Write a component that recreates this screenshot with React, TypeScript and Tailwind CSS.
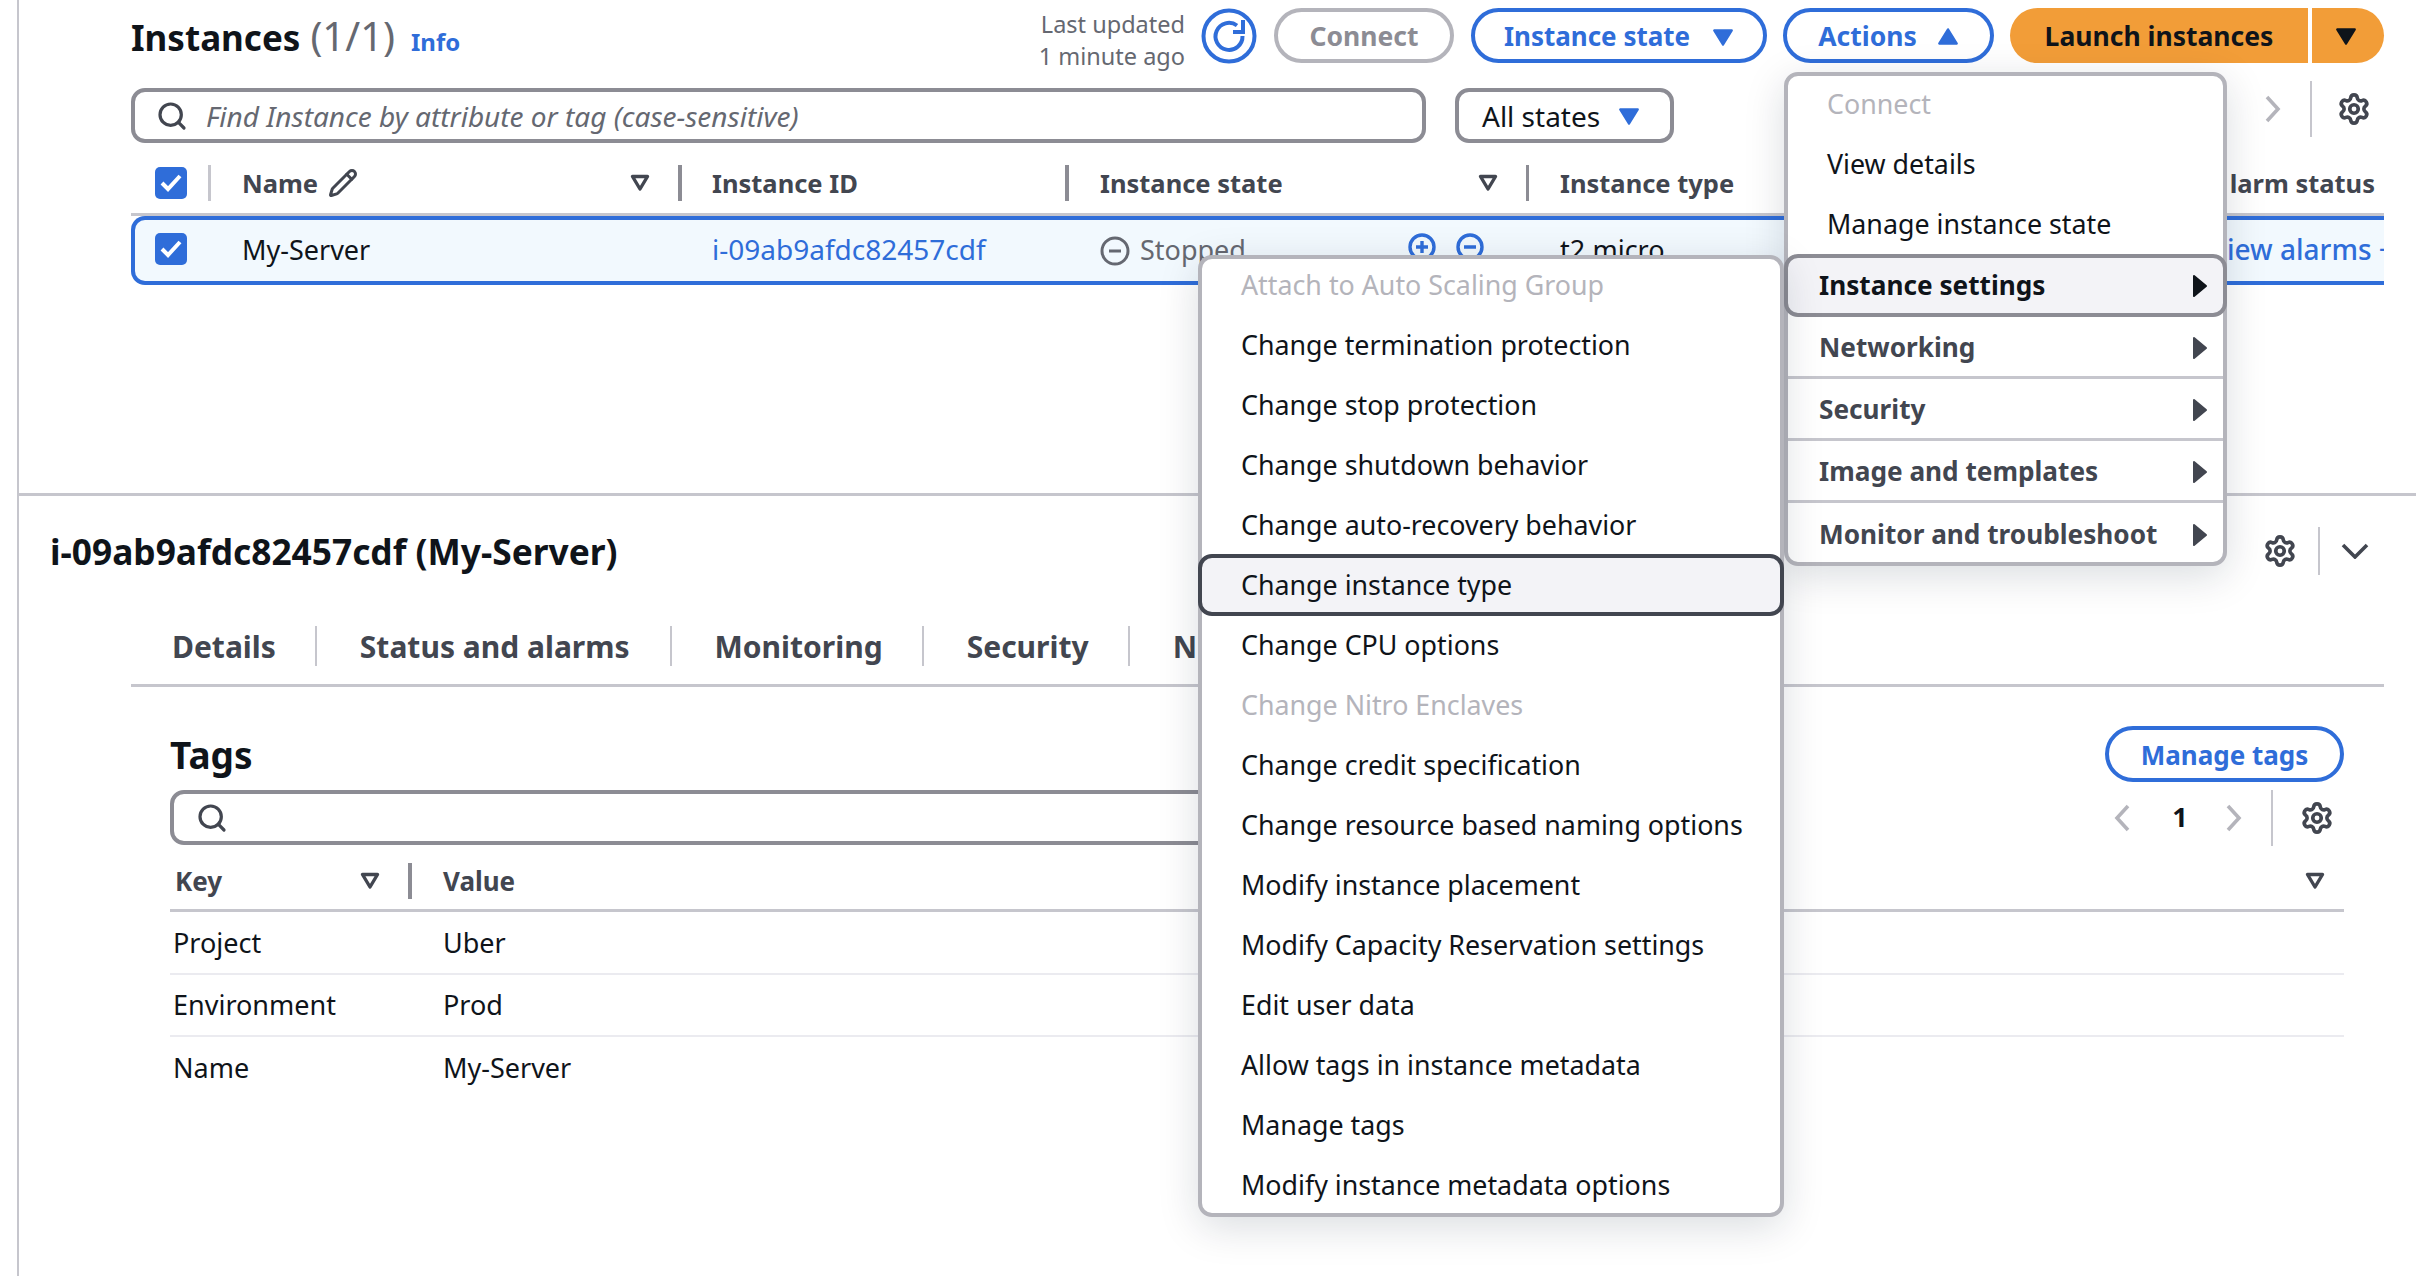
import { Pencil, Search, Settings } from 'lucide-react';

const font = "font-['Noto_Sans','Open_Sans',sans-serif]";

const submenu = [
  { label: 'Attach to Auto Scaling Group', disabled: true },
  { label: 'Change termination protection' },
  { label: 'Change stop protection' },
  { label: 'Change shutdown behavior' },
  { label: 'Change auto-recovery behavior' },
  { label: 'Change instance type', active: true },
  { label: 'Change CPU options' },
  { label: 'Change Nitro Enclaves', disabled: true },
  { label: 'Change credit specification' },
  { label: 'Change resource based naming options' },
  { label: 'Modify instance placement' },
  { label: 'Modify Capacity Reservation settings' },
  { label: 'Edit user data' },
  { label: 'Allow tags in instance metadata' },
  { label: 'Manage tags' },
  { label: 'Modify instance metadata options' },
];

function Caret({ className, up }: { className: string; up?: boolean }) {
  return (
    <svg viewBox="0 0 20 20" className={className} fill="currentColor">
      <path
        d={up ? 'M10 3 L18 16 L2 16 Z' : 'M2 4 L18 4 L10 17 Z'}
        stroke="currentColor"
        strokeWidth="2"
        strokeLinejoin="round"
      />
    </svg>
  );
}

function CaretRight({ className }: { className: string }) {
  return (
    <svg viewBox="0 0 16 24" className={className} fill="currentColor">
      <path d="M2 2 L14 12 L2 22 Z" stroke="currentColor" strokeWidth="2" strokeLinejoin="round" />
    </svg>
  );
}

function SortIcon() {
  return (
    <svg viewBox="0 0 20 20" className="w-5 h-5 shrink-0 text-[#424650]" fill="none">
      <path d="M2.5 3.5 L17.5 3.5 L10 16 Z" stroke="currentColor" strokeWidth="3.4" strokeLinejoin="round" />
    </svg>
  );
}

function Chevron({ left }: { left?: boolean }) {
  return (
    <svg viewBox="0 0 16 28" className="w-4 h-7 shrink-0 text-[#b4b4bb]" fill="none">
      <path d={left ? 'M14 2 L3 14 L14 26' : 'M2 2 L13 14 L2 26'} stroke="currentColor" strokeWidth="3.6" />
    </svg>
  );
}

function Checkbox({ className }: { className?: string }) {
  return (
    <span className={`w-8 h-8 rounded-[5px] bg-[#2f6dd9] flex items-center justify-center shrink-0 ${className ?? ''}`}>
      <svg viewBox="0 0 32 32" className="w-8 h-8" fill="none">
        <path d="M7 16 L13 22 L25 9" stroke="white" strokeWidth="4" />
      </svg>
    </span>
  );
}

function Refresh() {
  return (
    <svg viewBox="0 0 56 56" className="w-[56px] h-[56px] shrink-0" fill="none" stroke="#2f6dd9" strokeWidth="4">
      <circle cx="28" cy="28" r="25.5" />
      <path d="M36 17.5 A13.5 13.5 0 1 0 41.5 28" />
      <path d="M42 12 V24 H32" />
    </svg>
  );
}

function CircleIcon({ plus }: { plus?: boolean }) {
  return (
    <svg viewBox="0 0 28 28" className="w-[28px] h-[28px] shrink-0 mb-[8px]" fill="none" stroke="#2f6dd9" strokeWidth="3.4">
      <circle cx="14" cy="14" r="12" />
      <path d="M8 14 H20" />
      {plus && <path d="M14 8 V20" />}
    </svg>
  );
}

function Instances() {
  return (
    <div className="h-[493px] pl-[112px] pr-[32px] flex flex-col">
      <div className="flex items-center h-[55px] mt-[8px]">
        <div className="flex items-baseline w-[899px] pt-[6px] text-[35px] leading-[55px]">
          <span className="font-bold text-[#0f141a]">Instances</span>
          <span className="ml-[10px] text-[40px] text-[#656871]">(1/1)</span>
          <span className="ml-[16px] text-[24px] font-bold text-[#2f6dd9]">Info</span>
        </div>
        <div className="w-[155px] pt-[8px] text-right text-[23.5px] leading-[32px] text-[#656871]">
          <div>Last updated</div>
          <div>1 minute ago</div>
        </div>
        <div className="ml-[16px]">
          <Refresh />
        </div>
        <button className="ml-[17px] w-[180px] h-[55px] pt-[2px] rounded-full border-4 border-[#b4b4bb] text-[26.5px] font-bold text-[#8c8c94]">
          Connect
        </button>
        <button className="ml-[17px] w-[296px] h-[55px] pt-[2px] rounded-full border-4 border-[#2f6dd9] text-[26px] font-bold text-[#2f6dd9] flex items-center justify-center gap-[22px]">
          Instance state
          <Caret className="w-[22px] h-[22px]" />
        </button>
        <button className="ml-[16px] w-[211px] h-[55px] pt-[2px] rounded-full border-4 border-[#2f6dd9] text-[26.5px] font-bold text-[#2f6dd9] flex items-center justify-center gap-[20px]">
          Actions
          <Caret up className="w-[22px] h-[22px]" />
        </button>
        <button className="ml-[16px] w-[298px] h-[55px] pt-[2px] rounded-l-full bg-[#f29d38] text-[26.5px] font-bold text-[#0f141a]">
          Launch instances
        </button>
        <button className="ml-[4px] w-[72px] h-[55px] rounded-r-full bg-[#f29d38] text-[#0f141a] flex items-center justify-center pr-[4px]">
          <Caret className="w-[22px] h-[22px]" />
        </button>
      </div>

      <div className="flex items-center h-[55px] mt-[25px]">
        <div className="w-[1295px] h-[55px] shrink-0 rounded-[14px] border-4 border-[#8c8c94] flex items-center pl-[21px]">
          <Search className="w-[32px] h-[32px] text-[#424650]" strokeWidth={2.4} />
          <span className="ml-[18px] text-[28px] italic text-[#656871]">Find Instance by attribute or tag (case-sensitive)</span>
        </div>
        <div className="ml-[29px] w-[219px] h-[55px] shrink-0 rounded-[14px] border-4 border-[#8c8c94] flex items-center pl-[23px] gap-[18px] text-[28px] text-[#0f141a]">
          All states
          <Caret className="w-[22px] h-[22px] text-[#2f6dd9]" />
        </div>
        <span className="ml-[591px] mb-[14px]">
          <Chevron />
        </span>
        <span className="ml-[29px] mb-[14px] w-[2px] h-[56px] bg-[#c6c6cd]" />
        <Settings className="ml-[25px] mb-[14px] w-[34px] h-[34px] text-[#424650]" strokeWidth={2.6} />
      </div>

      <div className="flex items-center h-[73px] pt-[10px] border-b-[3px] border-[#c6c6cd] text-[25.5px] font-bold text-[#424650]">
        <span className="w-[24px] shrink-0" />
        <Checkbox />
        <span className="ml-[21px] w-[3px] h-[36px] shrink-0 bg-[#c6c6cd]" />
        <span className="ml-[31px] w-[436px] shrink-0 flex items-center pr-[28px]">
          Name
          <Pencil className="ml-[10px] w-[30px] h-[30px]" strokeWidth={2.4} />
          <span className="ml-auto">
            <SortIcon />
          </span>
        </span>
        <span className="w-[4px] h-[36px] shrink-0 bg-[#8c8c94]" />
        <span className="ml-[30px] w-[353px] shrink-0">Instance ID</span>
        <span className="w-[4px] h-[36px] shrink-0 bg-[#8c8c94]" />
        <span className="ml-[31px] w-[426px] shrink-0 flex items-center justify-between pr-[28px]">
          Instance state
          <SortIcon />
        </span>
        <span className="w-[3px] h-[36px] shrink-0 bg-[#8c8c94]" />
        <span className="ml-[31px] flex-1">Instance type</span>
        <span className="pr-[9px]">larm status</span>
      </div>

      <div className="flex items-center h-[69px] rounded-l-[14px] border-4 border-r-0 border-[#2f6dd9] bg-[#f2f9fe] text-[27px] text-[#0f141a] overflow-hidden">
        <span className="w-[20px] shrink-0" />
        <Checkbox className="mb-[4px]" />
        <span className="ml-[55px] w-[470px] shrink-0">My-Server</span>
        <span className="mb-[3px] text-[28px] text-[#2f6dd9] w-[388px] shrink-0">i-09ab9afdc82457cdf</span>
        <svg viewBox="0 0 30 30" className="w-[30px] h-[30px] shrink-0" fill="none" stroke="#656871" strokeWidth="3">
          <circle cx="15" cy="15" r="13" />
          <path d="M9 15 H21" />
        </svg>
        <span className="ml-[10px] w-[268px] shrink-0 text-[#656871]">Stopped</span>
        <CircleIcon plus />
        <span className="ml-[20px] shrink-0 flex items-center">
          <CircleIcon />
        </span>
        <span className="ml-[76px] w-[667px] shrink-0">t2.micro</span>
        <span className="mb-[3px] text-[28px] font-medium text-[#2f6dd9] whitespace-nowrap shrink-0">iew alarms +</span>
      </div>
    </div>
  );
}

function Details() {
  return (
    <div className="border-t-[3px] border-[#c6c6cd] pr-[32px]">
      <div className="flex items-center h-[110px] pl-[31px] text-[35.3px] font-bold text-[#0f141a]">
        <span>i-09ab9afdc82457cdf (My-Server)</span>
        <Settings className="ml-auto w-[34px] h-[34px] text-[#424650]" strokeWidth={2.6} />
        <span className="ml-[21px] w-[2px] h-[48px] bg-[#c6c6cd]" />
        <svg viewBox="0 0 28 16" className="ml-[21px] mr-[15px] w-[28px] h-[16px] text-[#424650]" fill="none">
          <path d="M2 2 L14 14 L26 2" stroke="currentColor" strokeWidth="3.6" />
        </svg>
      </div>

      <div className="ml-[112px] h-[81px] pt-[20px] flex items-start border-b-[3px] border-[#c6c6cd] text-[30px] font-bold text-[#424650]">
        <span className="pl-[41px] pr-[39px] h-[40px] flex items-center border-r-2 border-[#c6c6cd]">Details</span>
        <span className="pl-[43px] pr-[40px] h-[40px] flex items-center border-r-2 border-[#c6c6cd]">Status and alarms</span>
        <span className="pl-[43px] pr-[39px] h-[40px] flex items-center border-r-2 border-[#c6c6cd]">Monitoring</span>
        <span className="pl-[43px] pr-[39px] h-[40px] flex items-center border-r-2 border-[#c6c6cd]">Security</span>
        <span className="pl-[43px] h-[40px] flex items-center">N</span>
      </div>

      <div className="ml-[151px] mr-[40px] pt-[39px]">
        <div className="flex justify-between items-center h-[56px]">
          <span className="pt-[2px] text-[37px] font-bold text-[#0f141a]">Tags</span>
          <button className="w-[239px] h-[56px] pt-[2px] rounded-full border-4 border-[#2f6dd9] text-[26px] font-bold text-[#2f6dd9]">
            Manage tags
          </button>
        </div>
        <div className="flex items-center h-[55px] mt-[8px]">
          <div className="w-[1400px] h-[55px] shrink-0 rounded-l-[14px] border-4 border-[#8c8c94] flex items-center pl-[22px]">
            <Search className="w-[32px] h-[32px] text-[#424650]" strokeWidth={2.4} />
          </div>
          <span className="ml-[544px]">
            <Chevron left />
          </span>
          <span className="ml-[42px] w-[16px] text-center text-[27px] font-bold text-[#0f141a]">1</span>
          <span className="ml-[38px]">
            <Chevron />
          </span>
          <span className="ml-[29px] w-[2px] h-[56px] shrink-0 bg-[#c6c6cd]" />
          <Settings className="ml-[27px] w-[34px] h-[34px] text-[#424650]" strokeWidth={2.6} />
        </div>

        <div className="flex items-center h-[67px] pt-[8px] border-b-[3px] border-[#c6c6cd] text-[26px] font-bold text-[#424650]">
          <span className="ml-[5px] w-[185px] shrink-0">Key</span>
          <SortIcon />
          <span className="ml-[28px] w-[4px] h-[36px] shrink-0 bg-[#8c8c94]" />
          <span className="ml-[31px] w-[1862px] shrink-0">Value</span>
          <SortIcon />
        </div>
        {[
          ['Project', 'Uber'],
          ['Environment', 'Prod'],
          ['Name', 'My-Server'],
        ].map(([k, v], i) => (
          <div
            key={k}
            className={`flex items-center text-[27px] text-[#0f141a] ${i === 0 ? 'h-[63px] pt-[2px]' : 'h-[62px]'} ${i < 2 ? 'border-b-2 border-[#ebebf0]' : ''}`}
          >
            <span className="w-[273px] pl-[3px]">{k}</span>
            <span>{v}</span>
          </div>
        ))}
      </div>
    </div>
  );
}

function ActionsMenu() {
  return (
    <div className="absolute left-[1784px] top-[72px] w-[443px] h-[494px] rounded-[14px] border-4 border-[#b4b4bb] bg-white shadow-[0_10px_40px_rgba(0,30,50,0.15)] text-[26.8px]">
      <div className="h-[60px] pl-[39px] flex items-center -mt-[2px] text-[#b4b4bb]">Connect</div>
      <div className="h-[60px] pl-[39px] flex items-center text-[#0f141a]">View details</div>
      <div className="h-[60px] pl-[39px] flex items-center text-[#0f141a]">Manage instance state</div>
      <div className="-mx-[4px] h-[63px] pl-[31px] pr-[15px] pt-[1px] flex items-center justify-between rounded-[14px] border-4 border-[#8c8c94] bg-[#f3f3f7] text-[26.2px] font-bold text-[#0f141a]">
        Instance settings
        <CaretRight className="w-[16px] h-[24px]" />
      </div>
      {['Networking', 'Security', 'Image and templates', 'Monitor and troubleshoot'].map((label, i) => (
        <div
          key={label}
          className={`h-[62px] pl-[31px] pr-[15px] pt-[2px] flex items-center justify-between text-[26.2px] font-bold text-[#424650] ${i < 3 ? 'border-b-[3px] border-[#c6c6cd]' : ''}`}
        >
          {label}
          <CaretRight className="w-[16px] h-[24px]" />
        </div>
      ))}
    </div>
  );
}

function SubMenu() {
  return (
    <div className="absolute left-[1198px] top-[255px] w-[586px] h-[962px] rounded-[14px] border-4 border-[#b4b4bb] bg-white shadow-[0_10px_40px_rgba(0,30,50,0.15)] text-[26.8px]">
      <div className="-mt-[4px]">
        {submenu.map((item) => (
          <div
            key={item.label}
            className={
              item.active
                ? '-mx-[4px] h-[62px] -my-[1px] pl-[39px] pt-[1px] flex items-center rounded-[14px] border-4 border-[#424650] bg-[#f3f3f7] text-[#0f141a] whitespace-nowrap'
                : `h-[60px] pl-[39px] pt-[1px] flex items-center whitespace-nowrap ${item.disabled ? 'text-[#b4b4bb]' : 'text-[#0f141a]'}`
            }
          >
            {item.label}
          </div>
        ))}
      </div>
    </div>
  );
}

export default function App() {
  return (
    <div className={`relative w-[2416px] h-[1276px] overflow-hidden bg-white ${font}`}>
      <div className="ml-[17px] h-full border-l-2 border-[#c6c6cd]">
        <Instances />
        <Details />
      </div>
      <ActionsMenu />
      <SubMenu />
    </div>
  );
}
